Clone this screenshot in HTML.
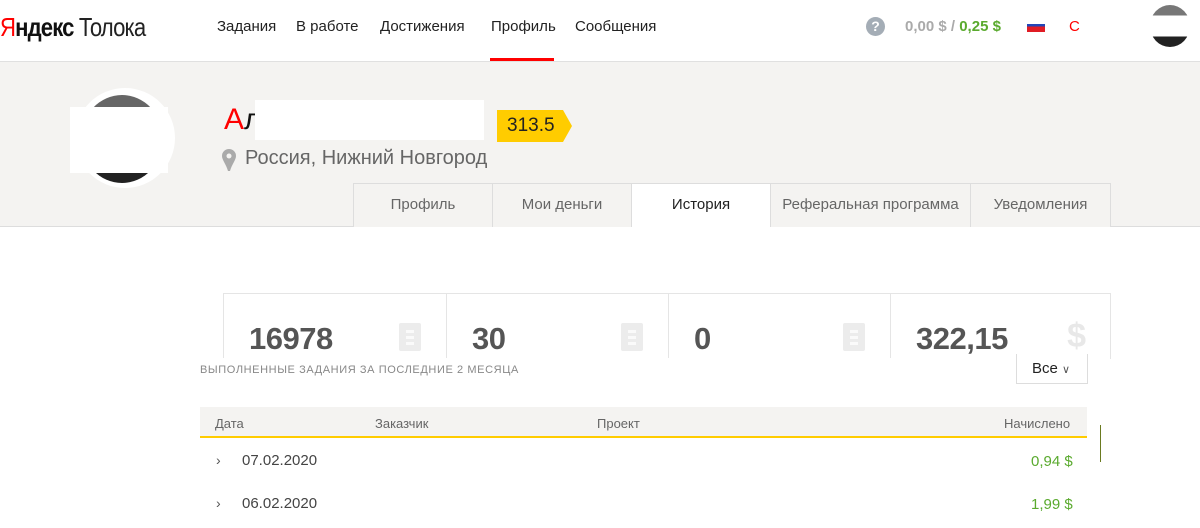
<!DOCTYPE html>
<html><head><meta charset="utf-8"><style>
*{margin:0;padding:0;box-sizing:border-box}
body{width:1200px;height:528px;overflow:hidden;background:#fff;font-family:"Liberation Sans",sans-serif;position:relative;color:#333}
.a{position:absolute;white-space:nowrap}
.nav{font-size:15px;color:#222;top:18px}
.tab{position:absolute;top:183px;height:44px;border:1px solid #ddd;border-bottom:none;font-size:15px;color:#666;text-align:center;line-height:42px;background:#f4f3f1}
.cell{position:absolute;top:293px;height:66px;border-left:1px solid #e5e5e5}
.num{position:absolute;left:25px;top:28px;font-size:31px;font-weight:bold;color:#555;letter-spacing:-0.5px}
.ic{position:absolute;right:25px;top:30px;width:22px;height:28px;background:#ececec;border-radius:2px}
.ic i{position:absolute;left:7px;width:8px;height:3px;background:#fafafa}
</style></head><body>
<div class="a" style="left:0;top:12px;font-size:26px;letter-spacing:-1px;transform:scaleX(.85);transform-origin:left"><span style="color:#f00">Я</span><b style="color:#111">ндекс</b> <span style="color:#222">Толока</span></div>
<div class="a nav" style="left:217px">Задания</div>
<div class="a nav" style="left:296px">В работе</div>
<div class="a nav" style="left:380px">Достижения</div>
<div class="a nav" style="left:491px">Профиль</div>
<div class="a" style="left:490px;top:58px;width:64px;height:3px;background:#f00"></div>
<div class="a nav" style="left:575px">Сообщения</div>
<div class="a" style="left:866px;top:17px;width:19px;height:19px;border-radius:50%;background:#a4adb6;color:#fff;font-weight:bold;font-size:14px;text-align:center;line-height:19px">?</div>
<div class="a" style="left:905px;top:18px;font-size:15px;font-weight:bold;color:#aaa">0,00 $ / <span style="color:#5aaa2e">0,25 $</span></div>
<div class="a" style="left:1027px;top:20px;width:18px;height:12px;background:linear-gradient(#fff 33%,#2246b8 33% 55%,#e01c24 55%)"></div>
<div class="a" style="left:1069px;top:18px;font-size:15px;color:#f00">С</div>
<div class="a" style="left:1150px;top:5px;width:40px;height:42px;border-radius:50%;background:linear-gradient(#777 0 25%,#fff 25% 75%,#222 75%)"></div>
<div class="a" style="left:0;top:61px;width:1200px;height:166px;background:#f4f3f1;border-top:1px solid #e0e0e0;border-bottom:1px solid #ddd"></div>
<div class="a" style="left:75px;top:88px;width:100px;height:100px;border-radius:50%;background:#fff"></div>
<div class="a" style="left:81px;top:95px;width:82px;height:88px;border-radius:50%;background:linear-gradient(#666 0 15%,#fff 15% 88%,#222 88%)"></div>
<div class="a" style="left:70px;top:107px;width:98px;height:66px;background:#fff"></div>
<div class="a" style="left:224px;top:103px;font-size:30px;color:#f00">А<span style="color:#111">л</span></div>
<div class="a" style="left:255px;top:100px;width:229px;height:40px;background:#fff"></div>
<div class="a" style="left:497px;top:110px;width:66px;height:32px;background:#fc0;font-size:19px;color:#222;line-height:32px;padding-left:10px">313.5</div>
<div class="a" style="left:563px;top:110px;border-left:9px solid #fc0;border-top:16px solid transparent;border-bottom:16px solid transparent"></div>
<svg class="a" style="left:222px;top:149px" width="14" height="22" viewBox="0 0 14 22"><path d="M7 0a7 7 0 0 0-7 7c0 4 4 8 6 15h2c2-7 6-11 6-15a7 7 0 0 0-7-7z" fill="#aaa"/><circle cx="7" cy="7" r="2.5" fill="#f4f3f1"/></svg>
<div class="a" style="left:245px;top:147px;font-size:20px;color:#666">Россия, Нижний Новгород</div>
<div class="tab" style="left:353px;width:140px">Профиль</div>
<div class="tab" style="left:492px;width:140px">Мои деньги</div>
<div class="tab" style="left:631px;width:140px;background:#fff;color:#222;height:44px">История</div>
<div class="tab" style="left:770px;width:201px">Реферальная программа</div>
<div class="tab" style="left:970px;width:141px">Уведомления</div>
<div class="a" style="left:223px;top:293px;width:888px;height:1px;background:#e5e5e5"></div>
<div class="cell" style="left:223px;width:223px"><div class="num">16978</div><div class="ic"><i style="top:7px"></i><i style="top:13px"></i><i style="top:19px"></i></div></div>
<div class="cell" style="left:446px;width:222px"><div class="num">30</div><div class="ic"><i style="top:7px"></i><i style="top:13px"></i><i style="top:19px"></i></div></div>
<div class="cell" style="left:668px;width:222px"><div class="num">0</div><div class="ic"><i style="top:7px"></i><i style="top:13px"></i><i style="top:19px"></i></div></div>
<div class="cell" style="left:890px;width:221px;border-right:1px solid #e5e5e5"><div class="num">322,15</div><div class="a" style="right:24px;top:24px;font-size:34px;color:#e8e8e8;font-weight:bold">$</div></div>
<div class="a" style="left:200px;top:358px;width:910px;height:20px;background:#fff"></div>
<div class="a" style="left:200px;top:364px;font-size:11px;color:#888;letter-spacing:.6px">ВЫПОЛНЕННЫЕ ЗАДАНИЯ ЗА ПОСЛЕДНИЕ 2 МЕСЯЦА</div>
<div class="a" style="left:1016px;top:354px;width:72px;height:30px;border:1px solid #ddd;border-top:none;background:#fff;font-size:15px;color:#222;padding:6px 0 0 15px">Все <span style="font-size:11px;color:#555">&#8744;</span></div>
<div class="a" style="left:200px;top:407px;width:887px;height:31px;background:#f4f3f1;border-bottom:2px solid #fc0"></div>
<div class="a" style="left:215px;top:416px;font-size:13px;color:#666">Дата</div>
<div class="a" style="left:375px;top:416px;font-size:13px;color:#666">Заказчик</div>
<div class="a" style="left:597px;top:416px;font-size:13px;color:#666">Проект</div>
<div class="a" style="left:1004px;top:416px;font-size:13px;color:#666">Начислено</div>
<div class="a" style="left:1100px;top:425px;width:1px;height:37px;background:#6a7a20"></div>
<div class="a" style="left:216px;top:452px;font-size:14px;color:#555">›</div>
<div class="a" style="left:242px;top:452px;font-size:15px;color:#444">07.02.2020</div>
<div class="a" style="left:1031px;top:453px;font-size:15px;color:#5aaa2e">0,94 $</div>
<div class="a" style="left:216px;top:495px;font-size:14px;color:#555">›</div>
<div class="a" style="left:242px;top:495px;font-size:15px;color:#444">06.02.2020</div>
<div class="a" style="left:1031px;top:496px;font-size:15px;color:#5aaa2e">1,99 $</div>
</body></html>
